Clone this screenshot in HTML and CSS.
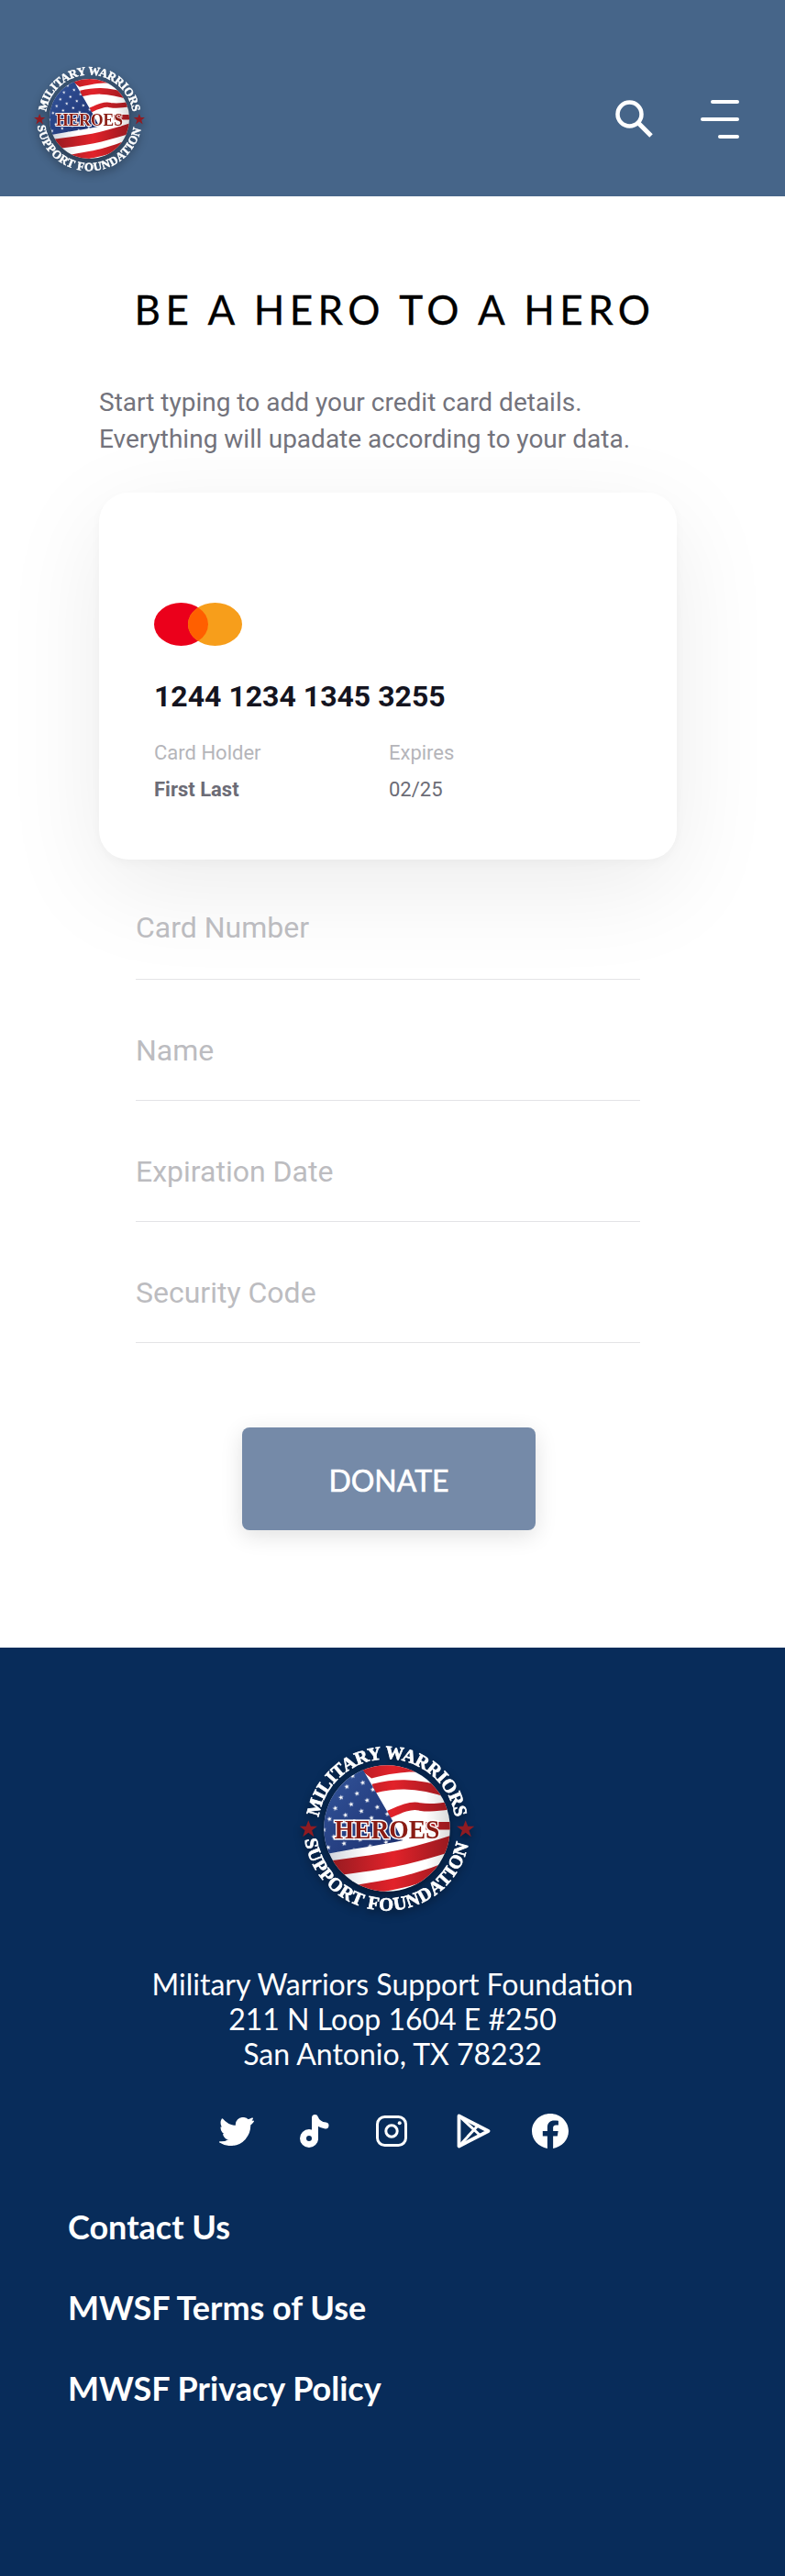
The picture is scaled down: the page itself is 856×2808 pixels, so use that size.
FILE: index.html
```html
<!DOCTYPE html>
<html lang="en">
<head>
<meta charset="utf-8">
<title>Be a Hero to a Hero</title>
<link rel="stylesheet" href="styles.css">
</head>
<body>
<svg class="defs" width="0" height="0" aria-hidden="true">
  <defs>
    <linearGradient id="redg" gradientUnits="userSpaceOnUse" x1="-75" y1="0" x2="75" y2="0">
      <stop offset="0" stop-color="#8c1a20"/><stop offset=".55" stop-color="#e2222a"/><stop offset="1" stop-color="#96191f"/>
    </linearGradient>
    <linearGradient id="whg" gradientUnits="userSpaceOnUse" x1="-75" y1="0" x2="75" y2="0">
      <stop offset="0" stop-color="#c9ccd6"/><stop offset=".35" stop-color="#ffffff"/><stop offset=".8" stop-color="#ffffff"/><stop offset="1" stop-color="#d8d8d8"/>
    </linearGradient>
    <linearGradient id="blg" gradientUnits="userSpaceOnUse" x1="-70" y1="-40" x2="10" y2="30">
      <stop offset="0" stop-color="#2f4f94"/><stop offset="1" stop-color="#1c2f6e"/>
    </linearGradient>
    <polygon id="st" points="0,-3 .8,-1 3,-1 1.2,.4 1.9,2.6 0,1.2 -1.9,2.6 -1.2,.4 -3,-1 -.8,-1"/>
    <pattern id="stars" width="19" height="21" patternUnits="userSpaceOnUse" patternTransform="rotate(-14)">
      <use href="#st" x="4.5" y="5" fill="#fff"/>
      <use href="#st" x="14" y="15.5" fill="#fff"/>
    </pattern>
    <clipPath id="disc"><circle r="73"/></clipPath>
    <path id="arcTop" d="M-79,-13 A80,80 0 0 1 79,-13"/>
    <path id="arcBot" d="M-95,13 A96,96 0 0 0 95,13"/>
    <symbol id="logo" viewBox="-103 -103 206 206">
      <circle r="73" fill="url(#whg)"/>
      <g clip-path="url(#disc)">
        <path d="M-40,-75 L60,-75 L75,-55 C50,-66 30,-70 -18,-58 Z" fill="url(#redg)"/>
        <path d="M-16,-46 C5,-51 30,-55 74,-40" fill="none" stroke="url(#redg)" stroke-width="11"/>
        <path d="M2,-16 C15,-22 28,-28 38,-25 C50,-23 60,-24 76,-27" fill="none" stroke="url(#redg)" stroke-width="9"/>
        <path d="M45,-3 L76,-3" fill="none" stroke="url(#redg)" stroke-width="9"/>
        <path d="M-70,47 C-40,43 -10,40 20,33 C40,28 55,24 76,17" fill="none" stroke="url(#redg)" stroke-width="18"/>
        <path d="M-34,72 C-10,68 15,64 30,59 C45,55 60,50 76,43" fill="none" stroke="url(#redg)" stroke-width="13"/>
        <path d="M-32,-75 L8,-6 L18,14 C-10,20 -45,24 -76,31 L-76,-75 Z" fill="url(#blg)"/>
        <path d="M-32,-75 L8,-6 L18,14 C-10,20 -45,24 -76,31 L-76,-75 Z" fill="url(#stars)"/>
      </g>
      <text class="logo-arc"><textPath href="#arcTop" textLength="226" lengthAdjust="spacing">MILITARY WARRIORS</textPath></text>
      <text class="logo-arc"><textPath href="#arcBot" textLength="268" lengthAdjust="spacing">SUPPORT FOUNDATION</textPath></text>
      <text class="logo-heroes" x="0" y="12" textLength="122" lengthAdjust="spacingAndGlyphs">HEROES</text>
      <use href="#st" transform="translate(-91 1) scale(3.4)" fill="#8f1b22"/>
      <use href="#st" transform="translate(91 1) scale(3.4)" fill="#8f1b22"/>
    </symbol>
  </defs>
</svg>

<header class="topbar">
  <svg class="logo logo-small" role="img" aria-label="Military Warriors Support Foundation"><use href="#logo"/></svg>
  <div class="topbar-actions">
    <svg class="icon-search" viewBox="0 0 41 41" aria-label="Search" role="img">
      <circle cx="15.5" cy="15.5" r="13" fill="none" stroke="#fff" stroke-width="4.5"/>
      <path d="M25,25 L39,39" fill="none" stroke="#fff" stroke-width="5"/>
    </svg>
    <div class="icon-menu" role="img" aria-label="Menu">
      <span class="bar bar-a"></span>
      <span class="bar bar-b"></span>
      <span class="bar bar-c"></span>
    </div>
  </div>
</header>

<main class="content">
  <h1 class="headline">BE A HERO TO A HERO</h1>
  <p class="intro">Start typing to add your credit card details.<br>Everything will upadate according to your data.</p>

  <section class="card">
    <svg class="card-brand" viewBox="0 0 96 47" aria-label="Mastercard" role="img">
      <ellipse cx="29.5" cy="23.5" rx="29.5" ry="23.5" fill="#eb001b"/>
      <ellipse cx="66.5" cy="23.5" rx="29.5" ry="23.5" fill="#f79e1b"/>
      <path d="M48,5.2 A29.5,23.5 0 0 1 48,41.8 A29.5,23.5 0 0 1 48,5.2 Z" fill="#ff5f00"/>
    </svg>
    <div class="card-number">1244 1234 1345 3255</div>
    <div class="card-meta">
      <div class="meta-col meta-holder">
        <div class="meta-label">Card Holder</div>
        <div class="meta-value meta-strong">First Last</div>
      </div>
      <div class="meta-col">
        <div class="meta-label">Expires</div>
        <div class="meta-value">02/25</div>
      </div>
    </div>
  </section>

  <form class="fields">
    <div class="field"><span class="field-text">Card Number</span></div>
    <div class="field"><span class="field-text">Name</span></div>
    <div class="field"><span class="field-text">Expiration Date</span></div>
    <div class="field"><span class="field-text">Security Code</span></div>
  </form>

  <div class="cta"><button class="donate" type="button">DONATE</button></div>
</main>

<footer class="footer">
  <svg class="logo logo-large" role="img" aria-label="Military Warriors Support Foundation"><use href="#logo"/></svg>
  <address class="address">Military Warriors Support Foundation<br>211 N Loop 1604 E #250<br>San Antonio, TX 78232</address>
  <div class="socials">
    <svg class="soc soc-tw" viewBox="-10 -10 532 436" aria-label="Twitter" role="img"><path fill="#fff" stroke="#fff" stroke-width="22" stroke-linejoin="round" transform="translate(0 -48)" d="M459.37 151.716c.325 4.548.325 9.097.325 13.645 0 138.72-105.583 298.558-298.558 298.558-59.452 0-114.68-17.219-161.137-47.106 8.447.974 16.568 1.299 25.34 1.299 49.055 0 94.213-16.568 130.274-44.832-46.132-.975-84.792-31.188-98.112-72.772 6.498.974 12.995 1.624 19.818 1.624 9.421 0 18.843-1.3 27.614-3.573-48.081-9.747-84.143-51.98-84.143-102.985v-1.299c13.969 7.797 30.214 12.67 47.431 13.319-28.264-18.843-46.781-51.005-46.781-87.391 0-19.492 5.197-37.36 14.294-52.954 51.655 63.675 129.3 105.258 216.365 109.807-1.624-7.797-2.599-15.918-2.599-24.04 0-57.828 46.782-104.934 104.934-104.934 30.213 0 57.502 12.67 76.67 33.137 23.715-4.548 46.456-13.32 66.599-25.34-7.798 24.366-24.366 44.833-46.132 57.827 21.117-2.273 41.584-8.122 60.426-16.243-14.292 20.791-32.161 39.308-52.628 54.253z"/></svg>
    <svg class="soc soc-tt" viewBox="0 0 32 37" aria-label="TikTok" role="img">
      <circle cx="10" cy="26" r="6.5" fill="none" stroke="#fff" stroke-width="7"/>
      <path d="M16.5,26 V3.5 C18,8 21,11 28,12" fill="none" stroke="#fff" stroke-width="7" stroke-linecap="round" stroke-linejoin="round"/>
    </svg>
    <svg class="soc soc-ig" viewBox="0 0 34 34" aria-label="Instagram" role="img">
      <rect x="1.5" y="1.5" width="31" height="31" rx="8" fill="none" stroke="#fff" stroke-width="3"/>
      <circle cx="17" cy="17" r="6.2" fill="none" stroke="#fff" stroke-width="3"/>
      <circle cx="25.7" cy="8.3" r="2" fill="#fff"/>
    </svg>
    <svg class="soc soc-pl" viewBox="0 0 37 38" aria-label="Google Play" role="img">
      <path d="M2.5,2.5 L34.5,19 L2.5,35.5 Z" fill="none" stroke="#fff" stroke-width="3.8" stroke-linejoin="round"/>
      <path d="M2.5,2.5 L26,24 M2.5,35.5 L24,12" fill="none" stroke="#fff" stroke-width="3"/>
    </svg>
    <svg class="soc soc-fb" viewBox="0 0 24 24" preserveAspectRatio="none" aria-label="Facebook" role="img"><path fill="#fff" d="M24 12.073c0-6.627-5.373-12-12-12s-12 5.373-12 12c0 5.99 4.388 10.954 10.125 11.854v-8.385H7.078v-3.47h3.047V9.43c0-3.007 1.792-4.669 4.533-4.669 1.312 0 2.686.235 2.686.235v2.953H15.83c-1.491 0-1.956.925-1.956 1.874v2.25h3.328l-.532 3.47h-2.796v8.385C19.612 23.027 24 18.062 24 12.073z"/></svg>
  </div>
  <nav class="foot-links">
    <a class="foot-link" href="#">Contact Us</a>
    <a class="foot-link" href="#">MWSF Terms of Use</a>
    <a class="foot-link" href="#">MWSF Privacy Policy</a>
  </nav>
</footer>
</body>
</html>
```

FILE: styles.css
```css
* { box-sizing: border-box; }
html, body { margin: 0; padding: 0; }
body { width: 856px; background: #fff; font-family: "Lato", "Liberation Sans", sans-serif; overflow-x: hidden; }
.defs { display: block; height: 0; width: 0; }

.logo { display: block; overflow: visible; filter: drop-shadow(0 4px 5px rgba(0, 0, 0, .45)); }
.logo-arc { font-family: "Liberation Serif", serif; font-weight: 700; font-size: 21.5px; fill: #fff; stroke: #fff; stroke-width: .8px; }
.logo-heroes { font-family: "Liberation Serif", serif; font-weight: 700; font-size: 32px; text-anchor: middle; fill: #8a1c14; stroke: #fff; stroke-width: 3px; paint-order: stroke; }

.topbar { height: 214px; background: #466589; display: flex; align-items: center; justify-content: space-between; padding: 45px 50px 0 36px; }
.logo-small { width: 123px; height: 123px; }
.topbar-actions { display: flex; align-items: center; gap: 52px; }
.icon-search { width: 41px; height: 41px; display: block; }
.icon-menu { width: 42px; display: flex; flex-direction: column; align-items: flex-end; gap: 15px; }
.bar { display: block; height: 4px; background: #fff; border-radius: 2px; }
.bar-a { width: 31px; }
.bar-b { width: 42px; }
.bar-c { width: 23px; }

.content { padding: 96px 0 128px; }
.headline { margin: 0; padding-left: 5px; font-family: "Lato", sans-serif; font-weight: 400; font-size: 44px; line-height: 54px; letter-spacing: 5.4px; color: #000; text-align: center; -webkit-text-stroke: .3px #000; }
.intro { margin: 55px 0 0 108px; font-family: "Roboto", sans-serif; font-size: 28px; line-height: 40px; color: #73737c; }

.card { width: 630px; height: 400px; margin: 38px 0 0 108px; padding: 120px 60px 0; background: #fff; border-radius: 32px; box-shadow: 0 30px 110px rgba(0, 0, 0, .08), 0 4px 12px rgba(0, 0, 0, .03); }
.card-brand { display: block; width: 96px; height: 47px; }
.card-number { margin-top: 33px; font-family: "Roboto", sans-serif; font-weight: 700; font-size: 32px; line-height: 44px; color: #14141f; }
.card-meta { display: flex; margin-top: 27px; font-family: "Roboto", sans-serif; }
.meta-col { display: flex; flex-direction: column; gap: 14px; }
.meta-holder { width: 256px; }
.meta-label { font-size: 22px; line-height: 26px; color: #b5b5ba; }
.meta-value { font-size: 22px; line-height: 26px; color: #6c6c76; }
.meta-strong { font-weight: 700; }

.fields { width: 550px; margin: 0 0 0 148px; }
.field { height: 132px; border-bottom: 1px solid #e3e3e6; padding-top: 58px; font-family: "Roboto", sans-serif; }
.field:first-child { height: 131px; padding-top: 55px; }
.field-text { display: block; font-size: 32px; font-weight: 400; line-height: 38px; color: #bcbcc0; }

.cta { margin-top: 92px; display: flex; padding-left: 264px; }
.donate { width: 320px; height: 112px; padding-top: 3px; border: 0; border-radius: 8px; background: #758aa8; color: #fff; font-family: "Lato", sans-serif; font-weight: 400; font-size: 32px; -webkit-text-stroke: .6px #fff; box-shadow: 0 6px 24px rgba(0, 0, 0, .12); }

.footer { height: 1012px; background: #082c5a; color: #fff; padding-top: 100px; display: flex; flex-direction: column; }
.logo-large { width: 194px; height: 194px; align-self: center; margin-left: -12px; }
.address { margin-top: 54px; font-style: normal; text-align: center; font-size: 32px; line-height: 38px; }
.socials { display: flex; justify-content: center; align-items: center; margin-top: 45px; height: 40px; padding-left: 2px; }
.soc { display: block; flex: none; }
.soc-tw { width: 38px; height: 31px; margin-right: 50px; }
.soc-tt { width: 32px; height: 37px; margin-right: 51px; }
.soc-ig { width: 34px; height: 34px; margin-right: 54px; }
.soc-pl { width: 37px; height: 38px; margin-right: 45px; }
.soc-fb { width: 40px; height: 38px; }
.foot-links { display: flex; flex-direction: column; gap: 44px; margin-top: 62px; padding-left: 74px; }
.foot-link { font-weight: 700; font-size: 36px; line-height: 44px; color: #fff; text-decoration: none; }
```
